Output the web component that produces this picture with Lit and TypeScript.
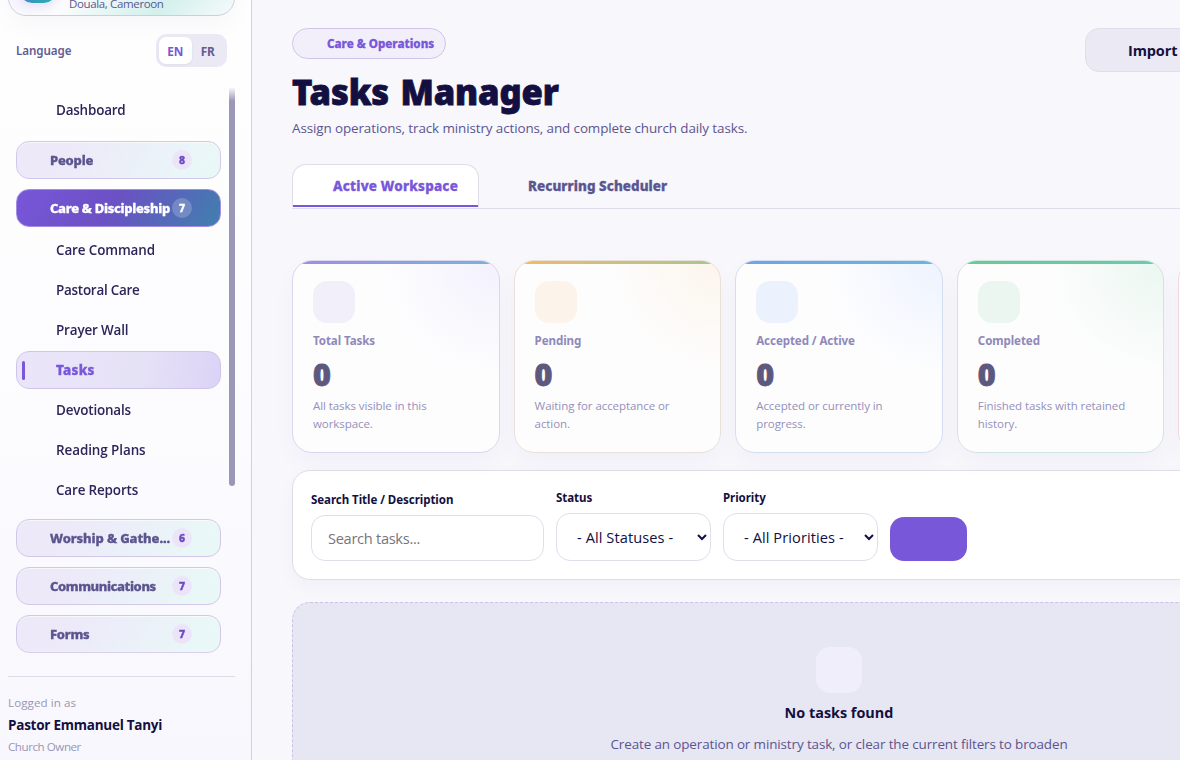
import { LitElement, html, css, nothing } from "lit";
import { classMap } from "lit/directives/class-map.js";

interface NavItem {
  label: string;
  kind: "link" | "group";
  tracking: number;
  count?: number;
  active?: boolean;
}

const NAV: NavItem[] = [
  { label: "Dashboard", kind: "link", tracking: -0.19 },
  { label: "People", kind: "group", tracking: -0.21, count: 8 },
  { label: "Care & Discipleship", kind: "group", tracking: -0.29, count: 7, active: true },
  { label: "Care Command", kind: "link", tracking: -0.12 },
  { label: "Pastoral Care", kind: "link", tracking: -0.25 },
  { label: "Prayer Wall", kind: "link", tracking: -0.15 },
  { label: "Tasks", kind: "link", tracking: 0.3, active: true },
  { label: "Devotionals", kind: "link", tracking: -0.18 },
  { label: "Reading Plans", kind: "link", tracking: -0.08 },
  { label: "Care Reports", kind: "link", tracking: -0.15 },
  { label: "Worship & Gathe...", kind: "group", tracking: -0.1, count: 6 },
  { label: "Communications", kind: "group", tracking: -0.4, count: 7 },
  { label: "Forms", kind: "group", tracking: -0.25, count: 7 },
];

const STATS = [
  { tone: "violet", label: "Total Tasks", value: 0, note: "All tasks visible in this workspace." },
  { tone: "amber", label: "Pending", value: 0, note: "Waiting for acceptance or action." },
  { tone: "blue", label: "Accepted / Active", value: 0, note: "Accepted or currently in progress." },
  { tone: "green", label: "Completed", value: 0, note: "Finished tasks with retained history." },
  { tone: "red", label: "", value: null, note: "" },
];

class SideNav extends LitElement {
  static styles = css`
    :host { display: flex; flex-direction: column; box-sizing: border-box; width: 252px; height: 760px;
      padding: 0 16px 0 8px; overflow: hidden; border-right: 1px solid #d3d1e0;
      background: linear-gradient(180deg, #fefefe, #fdfdff 40%, #f8f7fd); }
    .church { flex: none; box-sizing: border-box; height: 66px; margin-top: -50px; display: flex; align-items: flex-end;
      border: 1px solid #cfcddd; border-radius: 18px; padding: 0 11px 0;
      background: linear-gradient(135deg, #f4effd 0%, #fbfcfd 38%, #d3f0ed 72%, #f6fafb 100%);
      box-shadow: 0 10px 24px rgba(40, 30, 90, 0.03); }
    .logo { width: 36px; height: 36px; margin-bottom: 12px; border-radius: 12px;
      background: linear-gradient(135deg, #7857d9, #3f8fc0 55%, #1fb6ac); box-shadow: 0 4px 10px rgba(120, 87, 217, 0.15); }
    .place { margin: 0 0 3px 13px; font-size: 11.5px; line-height: 16px; color: #5b5690; letter-spacing: -0.36px; }
    .lang { flex: none; display: flex; align-items: center; justify-content: space-between; height: 33px; margin-top: 18px;
      padding: 0 8px; font-family: "Noto Sans", sans-serif; font-size: 11.6px; font-weight: 600; color: #625c94; letter-spacing: -0.08px; }
    .toggle { box-sizing: border-box; display: flex; width: 71px; height: 33px; padding: 3px; border-radius: 10px; background: #ebe9f3; }
    .toggle span { flex: 1; display: grid; place-items: center; border-radius: 7px; font-weight: 700; font-size: 11.8px; letter-spacing: -0.1px; }
    .toggle .on { background: #fff; color: #7857d9; box-shadow: 0 1px 3px rgba(40, 30, 90, 0.06); }
    .scroll { flex: none; display: flex; justify-content: space-between; margin-top: 20px; height: 567px; padding-left: 8px;
      -webkit-mask-image: linear-gradient(180deg, transparent, #000 14px, #000 calc(100% - 4px), rgba(0,0,0,.7)); mask-image: linear-gradient(180deg, transparent, #000 14px, #000 calc(100% - 4px), rgba(0,0,0,.7)); }
    .list { display: flex; flex-direction: column; gap: 2px; width: 205px; padding-top: 4px; }
    .thumb { width: 6px; height: 399px; border-radius: 3px; background: #9b97b7; }
    .item { flex: none; box-sizing: border-box; position: relative; display: flex; align-items: center; height: 38px;
      border: 1px solid transparent; border-radius: 13px; padding-left: 39px; font-size: 13.44px; font-weight: 600; color: #2c2658; white-space: nowrap; }
    .item.link.active { color: #7857d9; font-family: "Noto Sans", sans-serif; font-weight: 800; -webkit-text-stroke: 0.35px; border-color: #cfc5ea;
      background: linear-gradient(100deg, #ebe5fa, #e6e2f6 60%, #dbd3f6); }
    .item.link.active::before { content: ""; position: absolute; left: 5px; top: 9px; width: 3px; height: 19px; border-radius: 2px; background: #7857d9; }
    .item.group { margin: 4px 0; padding: 0 0 0 33px; font-family: "Noto Sans", sans-serif; font-size: 13px; font-weight: 800; -webkit-text-stroke: 0.35px; color: #5b558f;
      border-color: #d0c8ea; background: linear-gradient(125deg, #ede9f9 25%, #e9f8f7 92%); box-shadow: inset 0 1px 0 rgba(255,255,255,.6); }
    .item.group.lead { margin-top: 10px; }
    .item.group.tail { margin-bottom: 2px; }
    .item.group.after { margin-top: 8px; }
    .item.group.active { color: #fff; border-color: #a48ce2; background: linear-gradient(125deg, #7857d9, #6c50c4 45%, #437cb0 95%); box-shadow: none; }
    .name { width: 122px; }
    .count { display: grid; place-items: center; width: 20px; height: 20px; border-radius: 50%;
      background: #ece5fa; color: #6a48c4; font-size: 10.5px; font-weight: 800; letter-spacing: 0; }
    .active .count { background: rgba(255, 255, 255, 0.2); color: #fff; }
    .user { margin-top: 22px; border-top: 1px solid #dddbe9; padding-top: 15px; font-size: 11.6px; line-height: 22px; color: #9a96b4; letter-spacing: 0.08px; }
    .user b { display: block; font-size: 13.5px; font-weight: 700; color: #130f40; letter-spacing: -0.25px; }
    .role { letter-spacing: -0.45px; }
  `;
  render() {
    return html`
      <div class="church"><div class="logo"></div><div class="place">Douala, Cameroon</div></div>
      <div class="lang"><span>Language</span><div class="toggle"><span class="on">EN</span><span>FR</span></div></div>
      <div class="scroll">
        <div class="list">
          ${NAV.map((n, i) => html`<div class=${classMap({
                item: true, [n.kind]: true, active: !!n.active, lead: i === 1,
                tail: n.kind === "group" && NAV[i + 1]?.kind === "link",
                after: i > 1 && n.kind === "group" && NAV[i - 1].kind === "link",
              })}
              style="letter-spacing:${n.tracking}px">
            <span class="name">${n.label}</span>${n.count ? html`<span class="count">${n.count}</span>` : nothing}
          </div>`)}
        </div>
        <div class="thumb"></div>
      </div>
      <div class="user">Logged in as<b>Pastor Emmanuel Tanyi</b><span class="role">Church Owner</span></div>`;
  }
}
customElements.define("side-nav", SideNav);

class StatCard extends LitElement {
  static properties = { tone: { reflect: true }, label: {}, value: {}, note: {} };
  declare tone: string;
  declare label: string;
  declare value: number | null;
  declare note: string;
  static styles = css`
    :host { --a: #a08ce6; --b: #78b4d6; --tint: #f2effb; --glow: #f3f1fd; --line: #dad6ef;
      display: block; box-sizing: border-box; position: relative; overflow: hidden; height: 193px; padding: 20px; border: 1px solid var(--line);
      border-radius: 20px; background: radial-gradient(circle at 100% 0, var(--glow), #fdfdfe 115px); }
    :host([tone="amber"]) { --a: #f2ba66; --b: #a3c796; --tint: #fcf4eb; --glow: #fcf5ec; --line: #ebe0d9; }
    :host([tone="blue"]) { --a: #6ea3ea; --b: #66b8da; --tint: #ebf2fd; --glow: #edf3fe; --line: #d3def0; }
    :host([tone="green"]) { --a: #66cb92; --b: #66ccb0; --tint: #ebf6f1; --glow: #ebf7f0; --line: #d2e4e0; }
    :host([tone="red"]) { --a: #ec8a8a; --b: #eda58a; --tint: #fceeee; --glow: #fdeeee; --line: #efd9de; }
    .bar { height: 3px; margin: -20px -20px 17px; background: linear-gradient(90deg, var(--a), var(--b)); }
    .icon { width: 42px; height: 42px; border-radius: 14px; background: var(--tint); }
    .label { margin-top: 9px; font-family: "Noto Sans", sans-serif; font-size: 11.6px; line-height: 18px; font-weight: 700; color: #9089b8; letter-spacing: -0.1px; }
    .value { margin: 7px 0 6px; font-family: "Noto Sans", sans-serif; font-size: 30.5px; line-height: 34px; font-weight: 900; -webkit-text-stroke: 0.8px; color: #5d587e; }
    .note { font-size: 11.52px; line-height: 18px; color: #9690bb; letter-spacing: -0.08px; }
  `;
  render() {
    return html`<div class="bar"></div><div class="icon"></div><div class="label">${this.label}</div>
      <div class="value">${this.value}</div><div class="note">${this.note}</div>`;
  }
}
customElements.define("stat-card", StatCard);

class AppRoot extends LitElement {
  static styles = css`
    :host { display: flex; width: 1180px; height: 760px; overflow: hidden; background: #f8f7fc;
      font-family: "Open Sans", "Noto Sans", sans-serif; color: #130f40; }
    side-nav { flex: none; }
    .main { flex: 1; min-width: 0; overflow: hidden; }
    .page { width: 1094px; padding: 28px 0 0 40px; }
    .head { display: flex; align-items: flex-start; }
    .titles { width: 793px; }
    .pill { box-sizing: border-box; display: flex; align-items: center; width: 154px; height: 31px; padding-left: 34px; border: 1px solid #cfc5ea;
      border-radius: 16px; background: #f2effb; color: #7857d9; font-family: "Noto Sans", sans-serif; font-size: 11.6px; font-weight: 800; -webkit-text-stroke: 0.3px; letter-spacing: 0.01px; white-space: nowrap; }
    h1 { margin: 10px 0 0; font-family: "Noto Sans", sans-serif; font-size: 34.5px; line-height: 46px; font-weight: 900; -webkit-text-stroke: 0.8px; letter-spacing: -0.1px; word-spacing: 2.5px; }
    .sub { font-size: 13.44px; line-height: 22px; margin-top: 2px; color: #5b558f; letter-spacing: -0.11px; }
    .import { flex: 1; box-sizing: border-box; display: flex; align-items: center; height: 44px; padding-left: 42px; border: 1px solid #e0deea;
      border-radius: 14px; background: #ebe9f3; font-size: 14.5px; font-weight: 700; letter-spacing: -0.12px; }
    .tabs { display: flex; height: 44px; margin-top: 25px; border-bottom: 1px solid #dfddea; font-family: "Noto Sans", sans-serif; }
    .tab { box-sizing: border-box; display: flex; align-items: center; height: 43px; padding-left: 49px; font-size: 13.44px; font-weight: 800; -webkit-text-stroke: 0.35px; color: #5b558f; letter-spacing: 0.07px; }
    .tab.on { width: 187px; padding: 0 0 0 40px; color: #7857d9; letter-spacing: 0.22px; background: linear-gradient(#7857d9, #7857d9) bottom / 100% 2px no-repeat #fff;
      border: 1px solid #dfddea; border-bottom: 0; border-radius: 14px 14px 0 0; }
    .stats { display: grid; grid-template-columns: repeat(5, 1fr); gap: 14px; margin-top: 51px; }
    stat-card { box-shadow: 0 10px 24px rgba(30, 25, 80, 0.03); }
    .filters { box-sizing: border-box; display: flex; align-items: flex-end; gap: 12px; height: 110px; margin-top: 17px; padding: 0 18px 18px;
      border: 1px solid #dfddea; border-radius: 18px; background: #fff; box-shadow: 0 6px 18px rgba(30, 25, 80, 0.035); }
    .field { display: flex; flex-direction: column; width: 155px; gap: 7px; }
    .field.search { width: 233px; }
    .cap { font-family: "Noto Sans", sans-serif; font-size: 11.52px; line-height: 17px; font-weight: 700; letter-spacing: -0.05px; }
    .box { box-sizing: border-box; display: flex; align-items: center; justify-content: space-between; height: 48px; padding: 0 3px 0 20px; border: 1px solid #e0deec;
      border-radius: 14px; font-size: 14.6px; letter-spacing: 0.08px; white-space: nowrap; }
    .search .box { height: 46px; padding-left: 16px; color: #76757d; letter-spacing: -0.29px; }
    .box svg { width: 10px; height: 8px; }
    .go { width: 77px; height: 44px; border-radius: 14px; background: #7857d9; }
    .empty { box-sizing: border-box; display: flex; flex-direction: column; align-items: center; height: 240px; margin-top: 22px; padding-top: 44px;
      border: 1px dashed #cbc3e6; border-radius: 18px; background: #e7e6f3; }
    .blob { width: 46px; height: 46px; border-radius: 14px; background: #f0eefa; }
    .none { margin-top: 9px; font-size: 14.4px; line-height: 22px; font-weight: 700; }
    .hint { margin-top: 9px; width: 460px; text-align: center; font-size: 13.44px; line-height: 22px; color: #5b558f; letter-spacing: -0.12px; }
  `;
  private select(cap: string, text: string) {
    return html`<div class="field"><span class="cap">${cap}</span><div class="box"><span>${text}</span>
      <svg viewBox="0 0 10 8"><path d="M1 2l4 4 4-4" fill="none" stroke="#130f40" stroke-width="2"/></svg></div></div>`;
  }
  render() {
    return html`
      <side-nav></side-nav>
      <div class="main"><div class="page">
        <div class="head">
          <div class="titles"><div class="pill">Care &amp; Operations</div><h1>Tasks Manager</h1>
            <div class="sub">Assign operations, track ministry actions, and complete church daily tasks.</div></div>
          <div class="import">Import</div>
        </div>
        <div class="tabs"><div class="tab on">Active Workspace</div><div class="tab">Recurring Scheduler</div></div>
        <div class="stats">${STATS.map((s) => html`<stat-card .tone=${s.tone} .label=${s.label} .value=${s.value} .note=${s.note}></stat-card>`)}</div>
        <div class="filters">
          <div class="field search"><span class="cap">Search Title / Description</span><div class="box">Search tasks...</div></div>
          ${this.select("Status", "- All Statuses -")}${this.select("Priority", "- All Priorities -")}
          <div class="go"></div>
        </div>
        <div class="empty"><div class="blob"></div><div class="none">No tasks found</div>
          <div class="hint">Create an operation or ministry task, or clear the current filters to broaden</div></div>
      </div></div>`;
  }
}
customElements.define("app-root", AppRoot);
